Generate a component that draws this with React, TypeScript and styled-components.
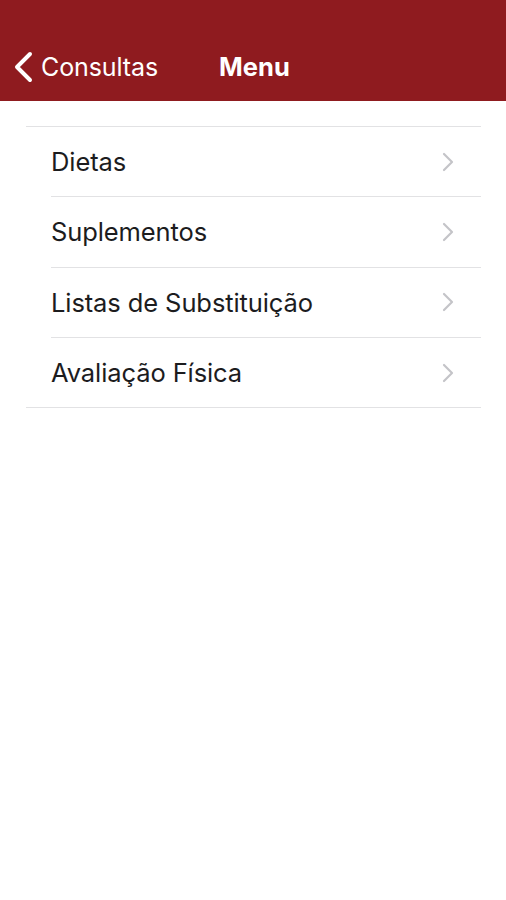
import React from "react";
import styled, {createGlobalStyle} from "styled-components";

const GlobalStyle = createGlobalStyle`
  body {
    margin: 0;
    background: #ffffff;
    font-family: Inter, "Liberation Sans", sans-serif;
  }
`;

const Page = styled.div`
  width: 506px;
  min-height: 900px;
  background: #ffffff;
`;

const NavBar = styled.div`
  height: 101px;
  background: #8f1b1f;
  display: flex;
  align-items: center;
  padding-top: 32px;
  box-sizing: border-box;
  color: #ffffff;
`;

const BackButton = styled.div`
  display: flex;
  align-items: center;
  gap: 8px;
  padding-left: 13px;
  font-size: 25px;
  letter-spacing: -0.1px;
`;

const Title = styled.div`
  margin-left: 61px;
  font-size: 25.5px;
  font-weight: 700;
`;

const List = styled.div`
  margin: 25px 25px 0 26px;
  border-top: 1.5px solid #e2e2e4;
`;

const Row = styled.div<{$last?: boolean}>`
  height: 70.3px;
  display: flex;
  align-items: center;
  justify-content: space-between;
  margin-left: ${p => (p.$last ? "0" : "25px")};
  padding-left: ${p => (p.$last ? "25px" : "0")};
  border-bottom: 1.5px solid #e2e2e4;
  box-sizing: border-box;
`;

const Label = styled.span`
  font-size: 25.5px;
  color: #1c1c1e;
  letter-spacing: -0.1px;
`;

const Chevron = styled.svg`
  width: 14px;
  height: 20px;
  margin-right: 26px;
`;

const items = ["Dietas", "Suplementos", "Listas de Substituição", "Avaliação Física"];

export default function App() {
  return (
    <>
      <GlobalStyle />
      <Page>
        <NavBar>
          <BackButton>
            <svg width="20" height="32" viewBox="0 0 20 32">
              <path d="M17 3 L4 16 L17 29" fill="none" stroke="#ffffff" strokeWidth="4" strokeLinecap="round" strokeLinejoin="round" />
            </svg>
            <span>Consultas</span>
          </BackButton>
          <Title>Menu</Title>
        </NavBar>
        <List>
          {items.map((item, i) => (
            <Row key={item} $last={i === items.length - 1}>
              <Label>{item}</Label>
              <Chevron viewBox="0 0 14 20">
                <path d="M3 2 L11 10 L3 18" fill="none" stroke="#c4c4c8" strokeWidth="2.2" strokeLinecap="round" strokeLinejoin="round" />
              </Chevron>
            </Row>
          ))}
        </List>
      </Page>
    </>
  );
}
